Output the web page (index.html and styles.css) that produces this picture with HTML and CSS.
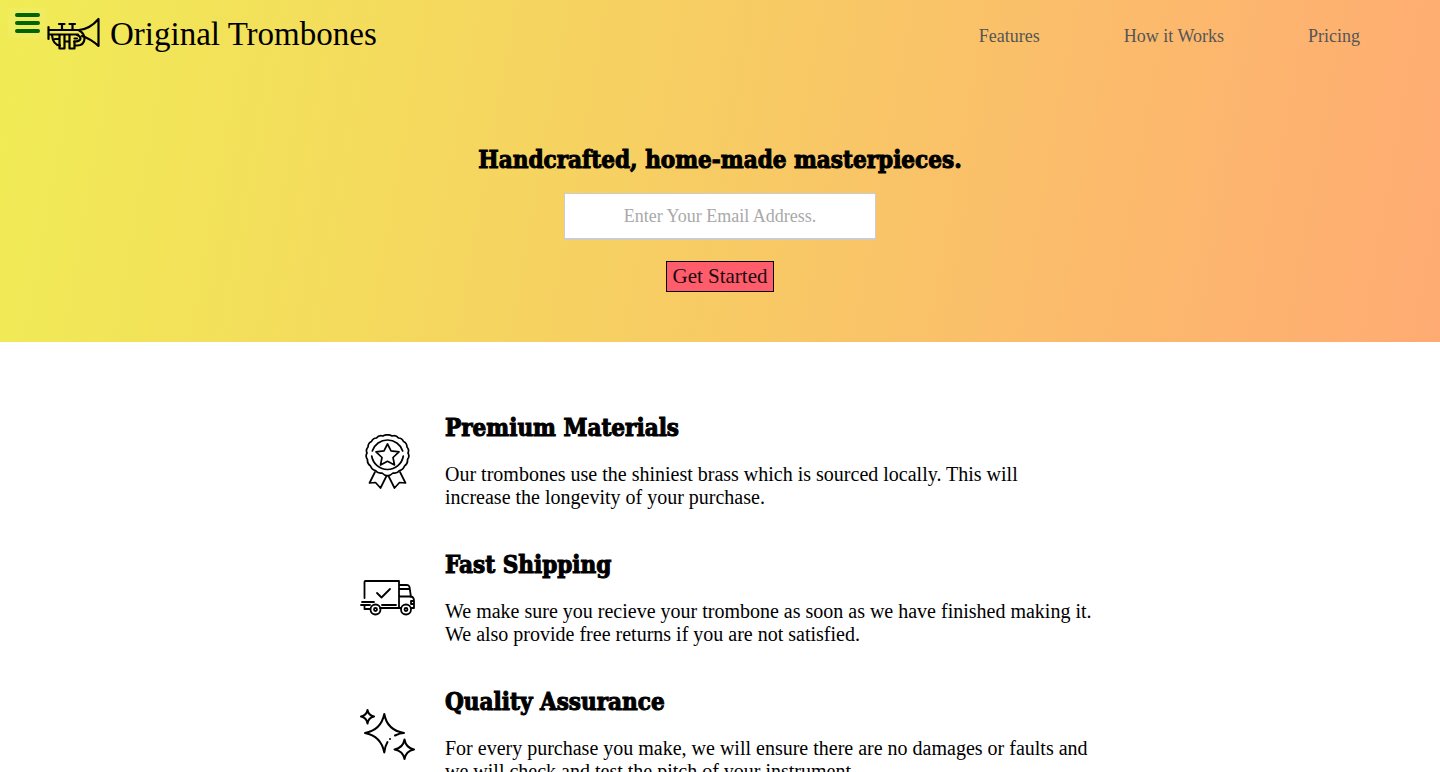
FILE: index.html
```html
<!DOCTYPE html>
<html lang="en">
<head>
<meta charset="utf-8">
<meta name="viewport" content="width=device-width, initial-scale=1">
<title>Original Trombones</title>
<link rel="stylesheet" href="styles.css">
</head>
<body>
<div class="hero">
  <button class="menu-button" type="button" aria-label="Menu">
    <span class="menu-bar"></span><span class="menu-bar"></span><span class="menu-bar"></span>
  </button>
  <header class="header">
    <a class="brand" href="#">
      <svg class="brand-icon" viewBox="0 0 54 34" fill="none" stroke="currentColor" stroke-width="2.2" stroke-linejoin="round" stroke-linecap="round" aria-hidden="true">
        <path d="M2.500 10V22M2.500 13H33Q44 12 52.500 2V29Q45 22 36 19M2.500 17.500H32M13 7H18.500M23.500 7H29M16 7V13M26.500 7V13"/>
        <path d="M6 18Q7 28 14 28.500M33 13.500Q38.500 16 38.500 22Q38 28.500 31 28.500H29M31 18Q34.500 19 34.500 21.500Q34 24.500 28 24.500M9 22H13"/>
        <path d="M13.500 18V31.500H18.500V18M18.500 24.500H23.500M23.500 18V31.500H28.500V24.500M28.500 21.500H31"/>
      </svg>
      <span>Original Trombones</span>
    </a>
    <nav class="nav">
      <a href="#features">Features</a>
      <a href="#how">How it Works</a>
      <a href="#pricing">Pricing</a>
    </nav>
  </header>
  <form class="signup">
    <h2 class="title">Handcrafted, home-made masterpieces.</h2>
    <input class="email" type="email" placeholder="Enter Your Email Address." aria-label="Email address">
    <button class="submit" type="button">Get Started</button>
  </form>
</div>
<main class="features" id="features">
  <section class="feature">
    <svg class="feature-icon" viewBox="0 1 55 55" fill="none" stroke="currentColor" stroke-width="1.7" stroke-linejoin="round" stroke-linecap="round" aria-hidden="true">
      <path d="M27.5 1.900Q30 1.500 32 3Q36 1.500 38.500 5Q42 5 43.500 8.500Q47 10 47 14Q49.500 17 48 20Q50 23.500 47.500 26.500Q48 31 44.500 33Q43 37 39.500 37.500Q37 41 33 40Q30 43 27.500 42.500Q25 43 22 40Q18 41 15.500 37.500Q12 37 10.500 33Q7 31 7.500 26.500Q5 23.500 7 20Q5.500 17 8 14Q8 10 11.500 8.500Q13 5 16.500 5Q19 1.500 23 3Q25 1.500 27.500 1.900Z"/>
      <path d="M12.300 18A16 16 0 0 1 42.700 18M43.300 23A16 16 0 0 1 11.700 23"/>
      <path d="M27.500 11L31 17.800L39 18.900L33 24.500L34.500 32L27.500 28.300L20.500 32L22 24.500L16 18.900L24 17.800Z"/>
      <path d="M15 39L9.500 50L15.500 49.500L20.500 55L26.500 43M40 39L45.500 50L39.500 49.500L34.500 55L28.500 43"/>
    </svg>
    <div>
      <h2 class="title">Premium Materials</h2>
      <p class="text">Our trombones use the shiniest brass which is sourced locally. This will increase the longevity of your purchase.</p>
    </div>
  </section>
  <section class="feature">
    <svg class="feature-icon" viewBox="0 0 55 55" fill="none" stroke="currentColor" stroke-width="1.8" stroke-linejoin="round" stroke-linecap="round" aria-hidden="true">
      <path d="M4.500 27V11Q4.500 10 5.500 10H39V32M39 14H47Q49 14 49.500 16L51 26M39 18H49M40 25.500H51Q54 26 54 30V37H51M54 30H51V33H54M39 31V37H41M2 31H14M1 34H10M4.500 34V38H10M20 37H40M22 34H36M17 22L21.500 26.500L30 18"/>
      <circle cx="15.500" cy="38.500" r="5"/><circle cx="46" cy="38.500" r="5"/>
      <circle cx="15.500" cy="38.500" r="1.500"/><circle cx="46" cy="38.500" r="1.500"/>
    </svg>
    <div>
      <h2 class="title">Fast Shipping</h2>
      <p class="text">We make sure you recieve your trombone as soon as we have finished making it.<br class="wide-break"> We also provide free returns if you are not satisfied.</p>
    </div>
  </section>
  <section class="feature">
    <svg class="feature-icon" viewBox="0 1 55 55" fill="none" stroke="currentColor" stroke-width="2" stroke-linejoin="round" stroke-linecap="round" aria-hidden="true">
      <path d="M35 28.500Q40 26 44 26Q27 23 24.300 7Q21 23 5 26Q21 29 24.300 45.500Q25 39 27.500 35M30 32V32.100"/>
      <path d="M7.500 3Q8.500 8.500 14 9.500Q8.500 10.500 7.500 16.500Q6.500 10.500 1 9.500Q6.500 8.500 7.500 3Z"/>
      <path d="M44.500 32.500Q46 41 54 42.500Q46 44 44.500 52Q43 44 34.500 42.500Q43 41 44.500 32.500Z"/>
    </svg>
    <div>
      <h2 class="title">Quality Assurance</h2>
      <p class="text">For every purchase you make, we will ensure there are no damages or faults and<br class="wide-break"> we will check and test the pitch of your instrument.</p>
    </div>
  </section>
</main>
</body>
</html>
```
FILE: styles.css
```css
* {
  box-sizing: border-box;
}

body {
  margin: 0;
  background: #fff;
  color: #000;
  font-family: "Liberation Serif", serif;
  font-size: 20px;
  line-height: 23px;
}

.hero {
  position: relative;
  padding-bottom: 50px;
  background: linear-gradient(100deg, #f0ec55, #ffab73);
}

.menu-button {
  position: absolute;
  top: 8px;
  left: 8px;
  display: flex;
  flex-direction: column;
  gap: 4px;
  padding: 5px 7px;
  border: 0;
  background: rgba(255, 255, 255, 0.06);
}

.menu-bar {
  width: 25px;
  height: 4px;
  border-radius: 2px;
  background: #006400;
}

.header {
  display: flex;
  align-items: center;
  justify-content: space-between;
  height: 68px;
  padding: 0 80px 0 46px;
}

.brand {
  display: flex;
  align-items: center;
  gap: 10px;
  color: #000;
  font-size: 33px;
  line-height: 40px;
  text-decoration: none;
}

.brand-icon {
  width: 54px;
  height: 34px;
}

.nav {
  display: flex;
  gap: 84px;
  padding-top: 4px;
  font-size: 18px;
}

.nav a {
  color: #555;
  text-decoration: none;
}

.signup {
  display: flex;
  flex-direction: column;
  align-items: center;
  padding-top: 77px;
}

.title {
  margin: 0;
  font-family: "DejaVu Serif Condensed", "DejaVu Serif", serif;
  font-size: 24px;
  font-weight: 900;
  line-height: 30px;
  -webkit-text-stroke: 1px currentColor;
}

.email {
  width: 312px;
  height: 47px;
  margin: 18px 0 21px;
  border: 1px solid #ccc;
  border-bottom-width: 2px;
  background: #fff;
  font: inherit;
  font-size: 18px;
  text-align: center;
}

.email::placeholder {
  color: #a9a9a9;
}

.submit {
  padding: 2px 5px;
  border: 1px solid #000;
  background: #ff5c6c;
  color: #200c0e;
  font-family: inherit;
  font-size: 21px;
  line-height: 25px;
}

.features {
  display: flex;
  flex-direction: column;
  gap: 41px;
  max-width: 720px;
  margin: 0 auto;
  padding: 71px 0;
}

.feature {
  display: flex;
  align-items: center;
  gap: 30px;
}

.feature-icon {
  flex: none;
  width: 55px;
  height: 55px;
}

.text {
  margin: 20px 0 0;
}

.wide-break {
  display: none;
}

@media (min-width: 800px) {
  .wide-break {
    display: inline;
  }

  .text:has(.wide-break) {
    white-space: nowrap;
  }
}
```
